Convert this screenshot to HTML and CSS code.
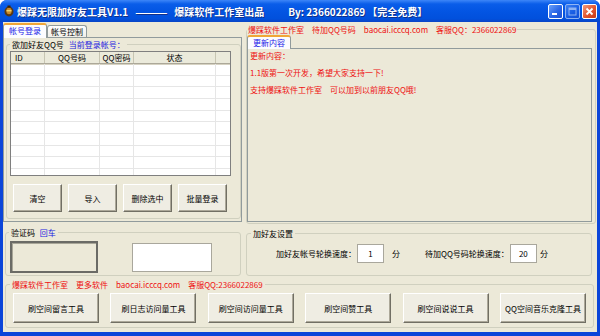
FILE: index.html
```html
<!DOCTYPE html>
<html lang="zh-CN">
<head>
  <meta charset="UTF-8" />
  <title>爆踩无限加好友工具V1.1</title>
  <link rel="stylesheet" href="styles.css">
</head>
<body>
<div class="window">
  <div class="titlebar">
    <svg class="app-icon" viewBox="0 0 10 12">
      <ellipse cx="5" cy="6.5" rx="4.5" ry="5" fill="#5a3a12"/>
      <ellipse cx="5" cy="6" rx="2.6" ry="3.2" fill="#c98a2a"/>
      <rect x="2.5" y="5" width="5" height="1.4" fill="#f2d36b"/>
      <rect x="3.5" y="0.5" width="3" height="2" fill="#3b2408"/>
    </svg>
    <div class="title">
      <span>爆踩无限加好友工具V1.1</span>
      <span class="t-dash">————</span>
      <span class="t-studio">爆踩软件工作室出品</span>
      <span class="t-by">By: 2366022869</span>
      <span class="t-free">【完全免费】</span>
    </div>
    <div class="winbtns">
      <span class="wbtn">
        <svg viewBox="0 0 13 13"><rect x="3" y="8" width="5" height="2" fill="#fff"/></svg>
      </span>
      <span class="wbtn off">
        <svg viewBox="0 0 13 13"><rect x="3" y="3" width="7" height="7" fill="none" stroke="#fff" stroke-width="1"/><rect x="3" y="3" width="7" height="2" fill="#fff"/></svg>
      </span>
      <span class="wbtn close">
        <svg viewBox="0 0 13 13"><path d="M3.5 3.5 L9.5 9.5 M9.5 3.5 L3.5 9.5" stroke="#fff" stroke-width="1.8"/></svg>
      </span>
    </div>
  </div>

  <div class="client">
    <div class="top">
      <div class="left">
        <div class="tabs">
          <span class="tab active">帐号登录</span>
          <span class="tab">帐号控制</span>
        </div>
        <div class="tabpage">
          <fieldset class="group accounts">
            <legend>欲加好友QQ号 <span class="blue">当前登录帐号：</span></legend>
            <div class="listview">
              <div class="lv-head">
                <span class="lv-id">ID</span>
                <span>QQ号码</span>
                <span>QQ密码</span>
                <span>状态</span>
                <span></span>
              </div>
              <div class="lv-body">
                <div class="lv-col"></div>
                <div class="lv-col"></div>
                <div class="lv-col"></div>
                <div class="lv-col"></div>
                <div class="lv-col"></div>
              </div>
            </div>
            <div class="btnrow">
              <button class="btn small">清空</button>
              <button class="btn small">导入</button>
              <button class="btn small">删除选中</button>
              <button class="btn small">批量登录</button>
            </div>
          </fieldset>
        </div>
        <fieldset class="group captcha">
          <legend>验证码 <span class="blue">回车</span></legend>
          <div class="captcha-img"></div>
          <input class="textbox code" type="text">
        </fieldset>
      </div>

      <div class="right">
        <fieldset class="group info">
          <legend class="red">爆踩软件工作室　待加QQ号码　baocai.icccq.com　客服QQ：2366022869</legend>
          <div class="tabs short">
            <span class="tab active">更新内容</span>
          </div>
          <div class="tabpage notes">
            <p>更新内容：</p>
            <p>1.1版第一次开发，希望大家支持一下!</p>
            <p>支持爆踩软件工作室　可以加到以前朋友QQ哦!</p>
          </div>
        </fieldset>
        <fieldset class="group settings">
          <legend>加好友设置</legend>
          <div class="speed-row">
            <span>加好友帐号轮换速度：</span>
            <input class="textbox num" type="text" value="1">
            <span class="unit">分</span>
            <span class="label2">待加QQ号码轮换速度：</span>
            <input class="textbox num" type="text" value="20">
            <span class="unit unit2">分</span>
          </div>
        </fieldset>
      </div>
    </div>

    <fieldset class="group tools">
      <legend class="red">爆踩软件工作室　更多软件　baocai.icccq.com　客服QQ:2366022869</legend>
      <div class="toolrow">
        <button class="btn tool">刷空间留言工具</button>
        <button class="btn tool">刷日志访问量工具</button>
        <button class="btn tool">刷空间访问量工具</button>
        <button class="btn tool">刷空间赞工具</button>
        <button class="btn tool">刷空间说说工具</button>
        <button class="btn tool">QQ空间音乐克隆工具</button>
      </div>
    </fieldset>
  </div>
</div>
</body>
</html>
```

FILE: styles.css
```css
* { box-sizing: border-box; }
body {
  margin: 0;
  width: 600px;
  height: 336px;
  overflow: hidden;
  background: #fff;
  font-family: "Noto Sans CJK SC", "Liberation Sans", sans-serif;
  font-size: 8px;
  color: #000;
}
.window {
  width: 600px;
  height: 336px;
  display: flex;
  flex-direction: column;
  background: #0b45d9;
  border-radius: 7px 7px 0 0;
}
.titlebar {
  height: 22px;
  display: flex;
  align-items: center;
  padding: 0 3px 0 4px;
  background: linear-gradient(#3d86f8 0%, #0a5de9 18%, #0355e3 50%, #0150dc 85%, #0945c6 100%);
  border-radius: 7px 7px 0 0;
  color: #fff;
}
.app-icon {
  width: 10px;
  height: 12px;
  margin-right: 3px;
}
.title {
  display: flex;
  align-items: center;
  font-size: 10px;
  font-weight: bold;
  white-space: nowrap;
  text-shadow: 1px 1px #10308a;
}
.t-dash { margin-left: 7px; letter-spacing: -2px; }
.t-studio { margin-left: 9px; }
.t-by { margin-left: 24px; }
.t-free { margin-left: 2px; }
.winbtns {
  margin-left: auto;
  display: flex;
  gap: 2px;
}
.wbtn {
  width: 15px;
  height: 15px;
  border: 1px solid #fff;
  border-radius: 2px;
  background: linear-gradient(135deg, #6aa0fa, #2a66e6 55%, #1c50d0);
  display: flex;
}
.wbtn svg { width: 13px; height: 13px; }
.wbtn.off { opacity: 0.55; }
.wbtn.close { background: linear-gradient(135deg, #f29b7c, #e2552f 55%, #c23a17); }

.client {
  flex: 1;
  margin: 0 3px 4px;
  background: #ece9d8;
  display: flex;
  flex-direction: column;
}
.top {
  display: flex;
  gap: 4px;
  height: 254px;
}
.left {
  width: 239px;
  display: flex;
  flex-direction: column;
}
.right {
  flex: 1;
  display: flex;
  flex-direction: column;
}

.tabs {
  display: flex;
  align-items: flex-end;
  height: 15px;
}
.tabs.short { height: 13px; }
.tab {
  height: 12px;
  padding: 0 3px;
  border: 1px solid #919b9c;
  border-bottom: none;
  border-radius: 3px 3px 0 0;
  background: linear-gradient(#fefefe, #f0efe8);
  line-height: 11px;
  white-space: nowrap;
}
.tab.active {
  position: relative;
  z-index: 1;
  height: 15px;
  margin-bottom: -1px;
  padding: 0 5px;
  color: #1818e8;
  background: #fcfcfe;
  border-top: 2px solid #f0a637;
  line-height: 12px;
}
.tabs.short .tab.active { height: 14px; }
.tabpage {
  height: 185px;
  border: 1px solid #919b9c;
  background: #ece9d8;
}

.group {
  margin: 0;
  padding: 0;
  min-width: 0;
  border: 1px solid #d0d0bf;
  border-radius: 3px;
}
.group legend {
  padding: 0 2px;
  line-height: 11px;
  white-space: nowrap;
}
.blue { color: #1a1ae0; margin-left: 3px; }
.red { color: #ee1010; }

.accounts {
  width: 235px;
  margin: 1px 0 0 2px;
  padding: 1px 0 0 3px;
  height: 180px;
}
.listview {
  width: 221px;
  height: 125px;
  border: 1px solid #7f7f7f;
  background: #fff;
  display: flex;
  flex-direction: column;
}
.lv-head, .lv-body {
  display: grid;
  grid-template-columns: 34px 55px 34px 82px 1fr;
}
.lv-head {
  height: 12px;
  background: #ebeadb;
  border-bottom: 1px solid #aca899;
  box-shadow: 0 1px #d6d2c2;
}
.lv-head span {
  text-align: center;
  line-height: 11px;
  border-right: 1px solid #c7c5b2;
}
.lv-head .lv-id {
  text-align: left;
  padding-left: 4px;
}
.lv-head span:last-child { border-right: none; }
.lv-body {
  flex: 1;
  background: repeating-linear-gradient(to bottom, transparent 0 10.67px, #e6e6e6 10.67px 11.67px);
}
.lv-col { border-right: 1px solid #e6e6e6; }
.lv-col:last-child { border-right: none; }

.btnrow {
  display: flex;
  gap: 6px;
  margin-top: 8px;
  padding-left: 3px;
}
.btn {
  font: inherit;
  color: #000;
  background: #efede3;
  border: 1px solid;
  border-color: #fff #716f64 #716f64 #fff;
  box-shadow: inset -1px -1px #aca899;
  padding: 0;
  white-space: nowrap;
}
.btn.small { width: 49px; height: 28px; }

.captcha {
  width: 236px;
  margin: 5px 0 0 2px;
  padding: 3px 0 2px 4px;
  display: flex;
  align-items: flex-start;
}
.captcha legend { margin-left: -1px; }
.captcha-img {
  width: 88px;
  height: 32px;
  border: 2px solid #6b6b66;
  box-shadow: inset 1px 1px #a8a698;
  background: #ece9d8;
}
.textbox {
  font: inherit;
  background: #fff;
  border: 1px solid #a9a79c;
  padding: 0;
  text-align: center;
}
.textbox.code {
  width: 80px;
  height: 29px;
  margin: 2px 0 0 34px;
}

.info {
  margin: 2px 1px 0 0;
  padding: 0 3px 1px 0;
}
.info legend { padding: 0 1px; }
.notes {
  height: 174px;
  padding: 1px 2px;
  color: #ee1010;
}
.notes p {
  margin: 0 0 5px;
  line-height: 12px;
}

.settings {
  margin: 4px 5px 0 0;
  height: 48px;
  padding: 5px 0 0 4px;
}
.speed-row {
  display: flex;
  align-items: center;
  margin-left: 25px;
  white-space: nowrap;
}
.textbox.num {
  width: 27px;
  height: 19px;
  margin-left: 1px;
}
.unit { margin-left: 8px; }
.unit2 { margin-left: 3px; }
.label2 { margin-left: 25px; }

.tools {
  margin: 3px 3px 0 2px;
  height: 49px;
  padding: 3px 7px 0;
}
.tools legend { margin-left: -3px; }
.toolrow {
  display: flex;
  justify-content: space-between;
}
.btn.tool { width: 86px; height: 30px; }
```
